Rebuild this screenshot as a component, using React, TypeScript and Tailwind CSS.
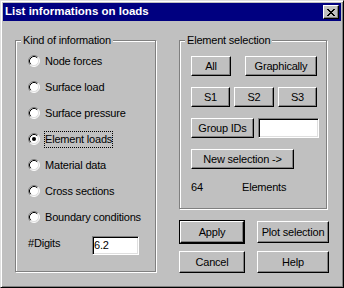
import React from 'react';

// Win95-style dialog: "List informations on loads"

const options = [
  'Node forces',
  'Surface load',
  'Surface pressure',
  'Element loads',
  'Material data',
  'Cross sections',
  'Boundary conditions',
];

function Radio({ checked }: { checked?: boolean }) {
  return (
    <svg width="12" height="12" viewBox="0 0 12 12" className="shrink-0">
      <circle cx="6" cy="6" r="5" fill="#fff" />
      <path d="M2.11 9.89 A5.5 5.5 0 0 1 9.89 2.11" fill="none" stroke="#808080" strokeWidth="1" />
      <path d="M9.89 2.11 A5.5 5.5 0 0 1 2.11 9.89" fill="none" stroke="#fff" strokeWidth="1" />
      <path d="M2.82 9.18 A4.5 4.5 0 0 1 9.18 2.82" fill="none" stroke="#000" strokeWidth="1" />
      <path d="M9.18 2.82 A4.5 4.5 0 0 1 2.82 9.18" fill="none" stroke="#dfdfdf" strokeWidth="1" />
      {checked && <circle cx="6" cy="6" r="2" fill="#000" />}
    </svg>
  );
}

function Btn({ label, className = '' }: { label: string; className?: string }) {
  return (
    <div
      className={`flex items-center justify-center bg-[#c0c0c0] border border-t-white border-l-white border-r-black border-b-black shadow-[inset_-1px_-1px_0_#808080] ${className}`}
    >
      {label}
    </div>
  );
}

function DefaultBtn({ label, className = '' }: { label: string; className?: string }) {
  return (
    <div className={`border border-black flex ${className}`}>
      <Btn label={label} className="flex-1" />
    </div>
  );
}

function Field({ value = '', className = '' }: { value?: string; className?: string }) {
  return (
    <div
      className={`flex items-center bg-white border border-t-[#808080] border-l-[#808080] border-b-white border-r-white shadow-[inset_1px_1px_0_#000,inset_-1px_-1px_0_#dfdfdf] pl-[1px] ${className}`}
    >
      {value}
    </div>
  );
}

function GroupBox({ title, className = '', children }: { title: string; className?: string; children: React.ReactNode }) {
  return (
    <div className={`relative border border-[#808080] shadow-[inset_1px_1px_0_#fff,1px_1px_0_#fff] ${className}`}>
      <span className="absolute top-[-8px] left-[5px] bg-[#c0c0c0] px-[2px] leading-[14px]">{title}</span>
      {children}
    </div>
  );
}

export default function App() {
  return (
    <div className="w-[344px] h-[288px] bg-[#c0c0c0] border border-t-[#dfdfdf] border-l-[#dfdfdf] border-r-black border-b-black shadow-[inset_1px_1px_0_#fff,inset_-1px_-1px_0_#808080] p-[2px] text-[11px] tracking-[-0.2px] text-black font-['Liberation_Sans',Arial,sans-serif] select-none">
      {/* Title bar */}
      <div className="h-[18px] bg-[#000080] flex items-center justify-between pl-[2px] pr-[2px]">
        <span className="text-white font-bold text-[11.5px] tracking-normal">List informations on loads</span>
        <div className="w-[16px] h-[14px] flex items-center justify-center bg-[#c0c0c0] border border-t-white border-l-white border-r-black border-b-black shadow-[inset_-1px_-1px_0_#808080]">
          <svg width="8" height="7" viewBox="0 0 8 7" shapeRendering="crispEdges">
            <path
              d="M0 0h2v1h-2zM6 0h2v1h-2zM1 1h2v1h-2zM5 1h2v1h-2zM2 2h4v1h-4zM3 3h2v1h-2zM2 4h4v1h-4zM1 5h2v1h-2zM5 5h2v1h-2zM0 6h2v1h-2zM6 6h2v1h-2z"
              fill="#000"
            />
          </svg>
        </div>
      </div>

      {/* Body */}
      <div className="flex pt-[19px] pl-[12px] gap-[23px]">
        <GroupBox title="Kind of information" className="w-[141px] h-[232px] pt-[7px] pl-[12px]">
          {options.map((o, i) => (
            <div key={o} className="h-[26px] flex items-center">
              <Radio checked={i === 3} />
              <span
                className={`ml-[4px] leading-[15px] border ${i === 3 ? 'border-dotted border-black' : 'border-transparent'}`}
              >
                {o}
              </span>
            </div>
          ))}
          <div className="mt-[6px] flex items-start h-[19px]">
            <span className="w-[64px] leading-[14px]">#Digits</span>
            <Field value="6.2" className="w-[47px] h-[19px]" />
          </div>
        </GroupBox>

        <div className="w-[150px] flex flex-col">
          <GroupBox title="Element selection" className="w-[148px] h-[169px] pt-[15px] pl-[11px] flex flex-col gap-[11px]">
            <div className="flex gap-[14px] h-[20px]">
              <Btn label="All" className="w-[40px]" />
              <Btn label="Graphically" className="w-[72px]" />
            </div>
            <div className="flex gap-[4px] h-[20px]">
              <Btn label="S1" className="w-[39px]" />
              <Btn label="S2" className="w-[40px]" />
              <Btn label="S3" className="w-[39px]" />
            </div>
            <div className="flex gap-[4px] h-[20px]">
              <Btn label="Group IDs" className="w-[63px]" />
              <Field className="w-[61px]" />
            </div>
            <div className="flex h-[20px]">
              <Btn label="New selection ->" className="w-[103px]" />
            </div>
            <div className="flex leading-[14px]">
              <span className="w-[51px]">64</span>
              <span>Elements</span>
            </div>
          </GroupBox>

          <div className="mt-[11px] h-[24px] flex items-center justify-between">
            <DefaultBtn label="Apply" className="w-[66px] h-[24px]" />
            <Btn label="Plot selection" className="w-[72px] h-[22px]" />
          </div>
          <div className="mt-[7px] flex justify-between">
            <Btn label="Cancel" className="w-[66px] h-[22px]" />
            <Btn label="Help" className="w-[72px] h-[22px]" />
          </div>
        </div>
      </div>
    </div>
  );
}
